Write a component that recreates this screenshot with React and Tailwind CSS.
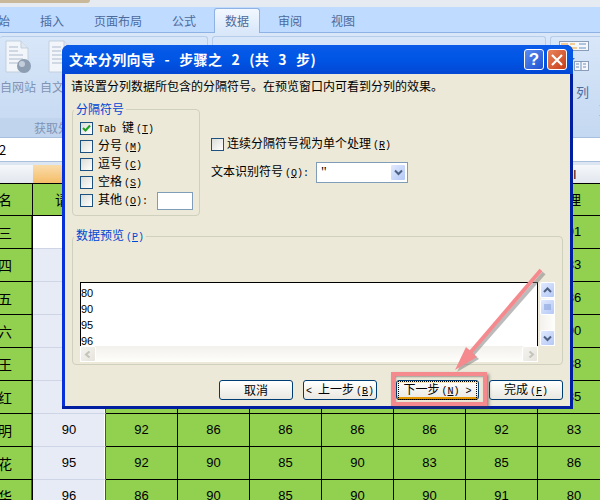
import React from "react";

const rows = [
  ["三", "", "", "", "", "", "", "", "91"],
  ["四", "", "", "", "", "", "", "", "83"],
  ["五", "", "", "", "", "", "", "", "86"],
  ["六", "", "", "", "", "", "", "", "90"],
  ["王", "", "", "", "", "", "", "", "88"],
  ["红", "", "", "", "", "", "", "", "85"],
  ["明", "90", "92", "86", "86", "86", "86", "92", "83"],
  ["花", "95", "92", "90", "85", "90", "83", "85", "86"],
  ["华", "96", "86", "90", "85", "90", "90", "91", "80"],
];

function DocIcon({ globe }) {
  return (
    <svg width="32" height="36" viewBox="0 0 32 36" className="shrink-0">
      <path d="M4 1h15l7 7v24H4z" fill="#f2f6fb" stroke="#c3cfdd" />
      <path d="M19 1v7h7" fill="#dfe7f1" stroke="#c3cfdd" />
      <path d="M7 7h9M7 11h9M7 15h14M7 19h14M7 23h14" stroke="#c5cedb" strokeWidth="1.5" />
      {globe && <circle cx="22" cy="26" r="7" fill="#8d9db2" />}
      {globe && <circle cx="20" cy="24" r="3" fill="#c4cedb" />}
    </svg>
  );
}

function ColumnsIcon() {
  return (
    <svg width="30" height="30" viewBox="0 0 30 30" className="shrink-0">
      <rect x="0.5" y="0.5" width="29" height="9" fill="#f4f7fb" stroke="#8a9db6" />
      <path d="M2 3h7M11 3h5M2 7h4M11 7h7" stroke="#f0a030" />
      <path d="M20 3h7M20 7h7" stroke="#6d90c0" />
      <rect x="15.5" y="20.5" width="14" height="9" fill="#f4f7fb" stroke="#8a9db6" />
      <path d="M22 20v9M17 23h3M24 23h3M17 26h3M24 26h3" stroke="#6d90c0" />
      <path d="M12 12v5h-2l3 3 3-3h-2v-5z" fill="#5a6c80" />
    </svg>
  );
}

function Label({ text, k, after }) {
  return (
    <span className="whitespace-nowrap">
      {text}
      <span className="ml-[2px] font-['Liberation_Mono',monospace] text-[10px]">
        (<span className="underline">{k}</span>){after}
      </span>
    </span>
  );
}

function Check({ checked }) {
  return (
    <span className="flex h-[13px] w-[13px] shrink-0 items-center justify-center border border-[#1c5180] bg-gradient-to-br from-[#dcdcd7] to-white">
      {checked && (
        <svg width="9" height="9" viewBox="0 0 9 9">
          <path d="M1 4l2.5 2.5L8 1.5" fill="none" stroke="#21a121" strokeWidth="2" />
        </svg>
      )}
    </span>
  );
}

function Btn({ children, focused, className }) {
  return (
    <button className={`flex h-[20px] items-center justify-center rounded-[3px] border border-[#003c74] bg-gradient-to-b from-white to-[#e9e8e1] text-[12px] text-black ${focused ? "shadow-[inset_0_-2px_0_#e59700,inset_0_2px_0_#fbe6b8]" : ""} ${className}`}>
      {children}
    </button>
  );
}

function ScrollBtn({ d, width = 2, color = "#4d6185", className }) {
  return (
    <div className={`flex items-center justify-center rounded-[2px] border border-white ${className}`}>
      <svg width="9" height="7" viewBox="0 0 9 7">
        <path d={d} fill="none" stroke={color} strokeWidth={width} />
      </svg>
    </div>
  );
}

const blueBtn = "bg-gradient-to-br from-[#e1eafe] to-[#b4c8f6]";
const fadedBtn = "bg-gradient-to-br from-[#f4f3ee] to-[#e6e4dc]";

function Dialog() {
  return (
    <div className="absolute left-[62px] top-[45px] flex h-[364px] w-[511px] flex-col rounded-t-[7px] bg-[#0831d9] shadow-[inset_-3px_0_0_#001ea0,inset_0_-3px_0_#001ea0]">
      {/* Title bar */}
      <div className="flex h-[29px] shrink-0 items-center justify-between rounded-t-[7px] bg-gradient-to-b from-[#0a5be8] via-[#0055e5] to-[#0447d4] pl-[7px] pr-[6px]">
        <span className="whitespace-nowrap text-[14px] font-bold tracking-[0.4px] text-white [word-spacing:5.5px]">
          文本分列向导 - 步骤之 2 (共 3 步)
        </span>
        <div className="flex gap-[3px]">
          <div className="flex h-[21px] w-[20px] items-center justify-center rounded-[3px] border border-white bg-gradient-to-br from-[#5c8bef] to-[#1e50d0] font-['Liberation_Sans',sans-serif] text-[17px] font-bold text-white">
            ?
          </div>
          <div className="flex h-[21px] w-[20px] items-center justify-center rounded-[3px] border border-white bg-gradient-to-br from-[#e8845c] to-[#c63a12]">
            <svg width="12" height="12" viewBox="0 0 12 12">
              <path d="M1 1l10 10M11 1L1 11" stroke="white" strokeWidth="2.2" />
            </svg>
          </div>
        </div>
      </div>

      {/* Body */}
      <div className="mx-[3px] mb-[3px] flex flex-1 flex-col bg-[#ece9d8] px-[7px] text-[12px] leading-[14px] text-black">
        <p className="ml-[-1px] mt-[5px] h-[14px] whitespace-nowrap">请设置分列数据所包含的分隔符号。在预览窗口内可看到分列的效果。</p>

        <div className="mt-[9px] flex h-[114px]">
          <fieldset className="h-[114px] w-[128px] rounded-[4px] border border-[#d0d0bf] pl-[7px]">
            <legend className="ml-[-6px] px-[2px] text-[#0046d5]">分隔符号</legend>
            <div className="mt-[6px] flex flex-col gap-[5px]">
              <div className="flex h-[13px] items-center gap-[5px]"><Check checked /><span className="whitespace-nowrap"><span className="font-['Liberation_Mono',monospace] text-[10px]">Tab </span>键<Label text="" k="T" /></span></div>
              <div className="flex h-[13px] items-center gap-[5px]"><Check /><Label text="分号" k="M" /></div>
              <div className="flex h-[13px] items-center gap-[5px]"><Check /><Label text="逗号" k="C" /></div>
              <div className="flex h-[13px] items-center gap-[5px]"><Check /><Label text="空格" k="S" /></div>
              <div className="flex h-[13px] items-center gap-[5px]">
                <Check />
                <Label text="其他" k="O" after=":" />
                <input className="ml-[4px] h-[18px] w-[36px] shrink-0 border border-[#7f9db9] bg-white" readOnly />
              </div>
            </div>
          </fieldset>

          <div className="ml-[11px] flex flex-col pt-[34px]">
            <div className="flex items-center gap-[3px]"><Check /><Label text="连续分隔符号视为单个处理" k="R" /></div>
            <div className="mt-[9px] flex items-center">
              <span className="w-[105px] whitespace-nowrap"><Label text="文本识别符号" k="Q" after=":" /></span>
              <div className="flex h-[21px] w-[92px] items-center justify-between border border-[#7f9db9] bg-white pl-[4px] pr-[1px]">
                <span className="font-['Liberation_Serif',serif] text-[14px] leading-[14px]">"</span>
                <ScrollBtn d="M1 1.5l3.5 3.5L8 1.5" className={`h-[17px] w-[16px] ${blueBtn}`} />
              </div>
            </div>
          </div>
        </div>

        <fieldset className="mt-[12px] h-[137px] w-[491px] rounded-[4px] border border-[#d0d0bf] px-[7px]">
          <legend className="ml-[-6px] px-[2px] text-[#0046d5]">
            数据预览<span className="ml-[2px] font-['Liberation_Mono',monospace] text-[10px]">(<span className="underline">P</span>)</span>
          </legend>
          <div className="mt-[37px] flex h-[80px]">
            <div className="flex w-[458px] flex-col">
              <div className="h-[64px] overflow-hidden border-l border-r border-t border-black bg-white pt-[2px] font-['Liberation_Sans',sans-serif] text-[11px] leading-[16px]">
                <div>80</div>
                <div>90</div>
                <div>95</div>
                <div>96</div>
              </div>
              <div className="flex h-[16px] justify-between bg-gradient-to-b from-[#f3f1ec] to-[#fefefb]">
                <ScrollBtn d="M5.5 0.5L2 3.5l3.5 3" color="#c4c3bc" className={`h-[16px] w-[16px] ${fadedBtn}`} />
                <ScrollBtn d="M3.5 0.5L7 3.5l-3.5 3" color="#c4c3bc" className={`h-[16px] w-[16px] ${fadedBtn}`} />
              </div>
            </div>
            <div className="ml-[2px] flex h-[64px] w-[15px] flex-col justify-between bg-gradient-to-r from-[#f3f1ec] to-[#fefefb]">
              <div className="flex flex-col gap-[1px]">
                <ScrollBtn d="M1 5l3.5-3.5L8 5" className={`h-[16px] w-[15px] ${blueBtn}`} />
                <ScrollBtn d="M1 1h7M1 3h7M1 5h7" width={1} color="#7f9ad4" className={`h-[16px] w-[15px] ${blueBtn}`} />
              </div>
              <ScrollBtn d="M1 1.5l3.5 3.5L8 1.5" className={`h-[16px] w-[15px] ${blueBtn}`} />
            </div>
          </div>
        </fieldset>

        <div className="mt-[15px] flex justify-end">
          <Btn className="w-[74px]">取消</Btn>
          <Btn className="ml-[10px] w-[74px]">
            <span className="whitespace-nowrap"><span className="font-['Liberation_Mono',monospace] text-[10px]">&lt; </span>上一步<span className="ml-[2px] font-['Liberation_Mono',monospace] text-[10px]">(<span className="underline">B</span>)</span></span>
          </Btn>
          <Btn focused className="ml-[19px] w-[83px]">
            <span className="whitespace-nowrap border border-dotted border-black px-[4px]">下一步<span className="ml-[2px] font-['Liberation_Mono',monospace] text-[10px]">(<span className="underline">N</span>) &gt;</span></span>
          </Btn>
          <Btn className="ml-[10px] w-[74px]">
            <span className="whitespace-nowrap">完成<span className="ml-[2px] font-['Liberation_Mono',monospace] text-[10px]">(<span className="underline">F</span>)</span></span>
          </Btn>
        </div>
      </div>
    </div>
  );
}

export default function App() {
  return (
    <div className="relative h-[500px] w-[600px] overflow-hidden bg-white font-['Noto_Sans_CJK_SC',sans-serif]">
      {/* Window strip */}
      <div className="h-[7px] bg-[#e6ebf1]">
        <div className="h-[3px] w-[90px] rounded-br-[6px] bg-[#c9b99a]" />
      </div>

      {/* Ribbon tabs */}
      <div className="flex h-[26px] items-end bg-[#bfdbff] text-[12px] text-[#4c6a9c] shadow-[inset_0_-1px_0_#8db2e3]">
        <span className="ml-[-2px] flex h-[24px] w-[12px] items-center justify-end overflow-hidden whitespace-nowrap">始</span>
        <span className="ml-[30px] flex h-[24px] items-center">插入</span>
        <span className="ml-[30px] flex h-[24px] items-center">页面布局</span>
        <span className="ml-[30px] flex h-[24px] items-center">公式</span>
        <span className="ml-[18px] flex h-[25px] w-[46px] items-center justify-center rounded-t-[3px] border border-b-0 border-[#8db2e3] bg-gradient-to-b from-[#f3f8ff] to-[#d8e7fa]">数据</span>
        <span className="ml-[18px] flex h-[24px] items-center">审阅</span>
        <span className="ml-[29px] flex h-[24px] items-center">视图</span>
      </div>

      {/* Ribbon body */}
      <div className="flex h-[104px] gap-[4px] bg-gradient-to-b from-[#d9e7f9] to-[#c4d8f1] pt-[3px] text-[12px] text-[#7f93b3]">
        <div className="flex h-[101px] w-[208px] shrink-0 flex-col rounded-t-[3px] border-r border-t border-[#b7cde9]">
          <div className="flex gap-[11px] pl-[2px] pt-[3px]">
            <DocIcon globe />
            <DocIcon />
          </div>
          <div className="flex whitespace-nowrap leading-[14px]">
            <span className="mt-[4px] w-[40px]">自网站</span>
            <span className="mt-[4px]">自文本</span>
          </div>
          <div className="mt-auto h-[19px] bg-[#c0d4ee] pl-[34px] leading-[19px]">获取外部数据</div>
        </div>
        <div className="h-[101px] w-[334px] shrink-0 rounded-t-[3px] border-x border-t border-[#b7cde9]" />
        <div className="flex h-[101px] flex-1 flex-col rounded-t-[3px] border-l border-t border-[#b7cde9] pl-[8px] pt-[4px]">
          <ColumnsIcon />
          <span className="ml-[17px] mt-[14px] text-[13px] leading-[14px] text-[#4c6a9c]">列</span>
          <span className="ml-[40px] mt-[3px] text-[13px] leading-[14px] text-[#4c6a9c]">重</span>
        </div>
      </div>

      {/* Formula bar */}
      <div className="flex h-[25px] items-center border-y border-[#a8c0de] bg-white text-[13px] text-black">
        <span className="ml-[-1px]">2</span>
      </div>
      <div className="h-[3px] bg-[#dce6f2]" />

      {/* Column headers */}
      <div className="flex h-[18px] text-[12px]">
        <div className="w-[33px] shrink-0 bg-gradient-to-b from-[#f5f7fa] to-[#e2e7ee]" />
        <div className="w-[73px] shrink-0 bg-gradient-to-b from-[#f9dca9] to-[#f5bd68]" />
        <div className="flex-1 bg-gradient-to-b from-[#f5f7fa] to-[#e2e7ee] pl-[467px] leading-[18px] text-black">I</div>
      </div>

      {/* Sheet */}
      <div className="bg-[#92d050] text-[14px] text-black">
        <div className="grid h-[33px] grid-cols-[33px_73px_repeat(7,72px)] border-y border-black">
          <div className="flex items-center justify-end border-r border-black pr-[20px] whitespace-nowrap">名</div>
          <div className="flex items-center justify-center border-r border-black">请假</div>
          <div className="border-r border-black" /><div className="border-r border-black" /><div className="border-r border-black" />
          <div className="border-r border-black" /><div className="border-r border-black" /><div className="border-r border-black" />
          <div className="flex items-center justify-center">理</div>
        </div>
        {rows.map((row, i) => (
          <div key={row[0]} className="grid h-[33px] grid-cols-[33px_73px_repeat(7,72px)] font-['Liberation_Sans',sans-serif] text-[13px]">
            <div className="flex items-center justify-end border-b border-r border-b-black border-r-black pr-[20px] font-['Noto_Sans_CJK_SC',sans-serif] text-[14px] shadow-[inset_-1px_0_0_#7030a0]">{row[0]}</div>
            <div className={`flex items-center justify-center border-b border-r border-b-[#cdd5e6] border-r-[#7030a0] shadow-[inset_-1px_0_0_#fff] ${i === 0 ? "bg-white" : "bg-[#e6ebf5]"}`}>{row[1]}</div>
            {row.slice(2).map((v, j) => (
              <div key={j} className={`flex items-center justify-center border-b border-black ${j < 6 ? "border-r" : ""}`}>{v}</div>
            ))}
          </div>
        ))}
      </div>

      <Dialog />

      {/* Red highlight around the next button */}
      <div className="absolute left-[391px] top-[372px] h-[34px] w-[96px] border-[4px] border-[#f58a8e] shadow-[2px_2px_3px_rgba(60,60,60,0.55),inset_1px_1px_2px_rgba(60,60,60,0.45)]" />

      {/* Arrow */}
      <svg className="pointer-events-none absolute left-0 top-0" width="600" height="500" viewBox="0 0 600 500">
        <path d="M542 271L470 353" stroke="#777" strokeOpacity="0.5" strokeWidth="4" transform="translate(2 2)" />
        <path d="M455 370L466 347L477 357Z" fill="#777" fillOpacity="0.5" transform="translate(2 2)" />
        <path d="M541 270L470 353" stroke="#f58a8e" strokeWidth="4" />
        <path d="M455 370L466 347L477 357Z" fill="#f58a8e" />
      </svg>
    </div>
  );
}
